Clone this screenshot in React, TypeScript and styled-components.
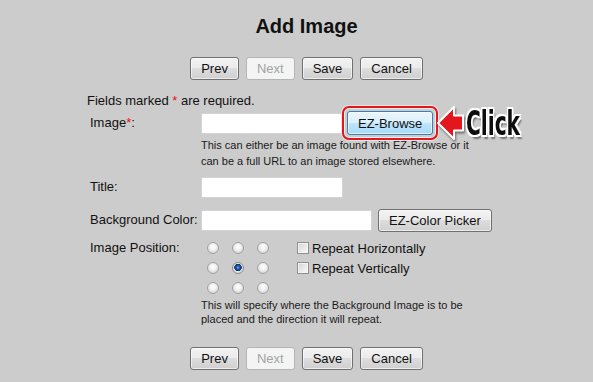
import { FC } from 'react'
import styled, { createGlobalStyle } from 'styled-components'

// page

const GlobalStyle = createGlobalStyle`
  html, body {
    margin: 0;
    padding: 0;
    background: #cccccc;
  }
  body {
    font-family: 'Liberation Sans', Arial, sans-serif;
    font-size: 13px;
    color: #111;
  }
`

const Page = styled.div`
  width: 593px;
  height: 382px;
  padding: 14px 0 0 20px;
  box-sizing: border-box;
  overflow: hidden;
`

const Heading = styled.h1`
  margin: 0;
  text-align: center;
  font-size: 20px;
  line-height: 24px;
  font-weight: bold;
  color: #111;
`

// buttons

const ButtonBar = styled.div<{ $top: number }>`
  display: flex;
  justify-content: center;
  gap: 7px;
  margin-top: ${p => p.$top}px;
`

const Btn = styled.button<{ $hot?: boolean }>`
  height: ${p => (p.$hot ? 24 : 23)}px;
  padding: 0 10px;
  margin: 0;
  font-family: inherit;
  font-size: 13px;
  color: #111;
  border: 1px solid ${p => (p.$hot ? '#3c7fb1' : '#707070')};
  border-radius: 3px;
  background: ${p =>
    p.$hot
      ? 'linear-gradient(#eaf6fd 0%, #d9f0fc 50%, #bee6fd 50%, #a7d9f5 100%)'
      : 'linear-gradient(#f2f2f2 0%, #ebebeb 50%, #dddddd 50%, #cfcfcf 100%)'};
  box-shadow: inset 0 0 0 1px rgba(255, 255, 255, 0.6);
  cursor: pointer;

  &:disabled {
    color: #a3a3a3;
    border-color: #b5b5b5;
    background: #f4f4f4;
    box-shadow: none;
    cursor: default;
  }
`

// form

const Form = styled.div`
  margin: 13px 0 0 67px;
`

const Notice = styled.div`
  line-height: 16px;
`

const Req = styled.span`
  color: #e8120c;
`

const Field = styled.div<{ $top: number }>`
  display: grid;
  grid-template-columns: 114px auto;
  margin-top: ${p => p.$top}px;
`

const Label = styled.div<{ $lh: number }>`
  padding-left: 3px;
  line-height: ${p => p.$lh}px;
  align-self: start;
`

const Controls = styled.div`
  display: flex;
  align-items: center;
  height: 24px;
`

const TextInput = styled.input<{ $w: number }>`
  width: ${p => p.$w}px;
  height: 21px;
  box-sizing: border-box;
  margin: 0;
  padding: 0 3px;
  border: 1px solid #d4d4d4;
  border-radius: 2px;
  background: #fff;
  font-family: inherit;
  font-size: 13px;
`

const Gap = styled.div<{ $w: number }>`
  width: ${p => p.$w}px;
  flex-shrink: 0;
`

const Help = styled.div<{ $lh: number; $top: number }>`
  grid-column: 2;
  margin-top: ${p => p.$top}px;
  font-size: 11px;
  line-height: ${p => p.$lh}px;
  color: #1a1a1a;
`

// click annotation

const Highlight = styled.div`
  display: flex;
  flex-shrink: 0;
  padding: 3px;
  border: 2px solid #e3161e;
  border-radius: 7px;
  box-shadow: 0 0 0 1px rgba(255, 255, 255, 0.55), inset 0 0 0 1px rgba(255, 255, 255, 0.7);
`

const Arrow = styled.svg`
  flex-shrink: 0;
  margin-left: -2px;
  filter: drop-shadow(1px 2px 1px rgba(0, 0, 0, 0.45));
`

const ClickText = styled.span`
  display: inline-block;
  margin-left: 1px;
  font-family: 'DejaVu Sans Condensed', 'DejaVu Sans', sans-serif;
  font-weight: bold;
  font-size: 34px;
  line-height: 34px;
  color: #0d0d0d;
  transform: scaleX(0.66);
  transform-origin: left center;
  text-shadow:
    2px 0 0 #fff, -2px 0 0 #fff, 0 2px 0 #fff, 0 -2px 0 #fff,
    2px 2px 0 #fff, -2px -2px 0 #fff, 2px -2px 0 #fff, -2px 2px 0 #fff,
    3px 4px 2px rgba(0, 0, 0, 0.45);
`

// image position

const PositionArea = styled.div`
  display: flex;
`

const RadioGrid = styled.div`
  display: grid;
  grid-template-columns: repeat(3, 25px);
  grid-auto-rows: 20px;
  justify-items: center;
  align-items: center;
  margin-left: -1px;
`

const Radio = styled.input`
  appearance: none;
  width: 12px;
  height: 12px;
  margin: 0;
  border-radius: 50%;
  border: 1px solid #a2a2a2;
  background: radial-gradient(circle at 50% 40%, #ffffff 0, #f2f2f2 3px, #d6d6d6 6px);
  box-sizing: border-box;

  &:checked {
    border-color: #8d8d8d;
    background: radial-gradient(circle at 50% 45%, #6fb4f0 0, #1d62b4 1.5px, #0b3468 3.5px, #e8e8e8 4px, #d6d6d6 6px);
  }
`

const Checks = styled.div`
  display: flex;
  flex-direction: column;
  margin-left: 22px;
`

const CheckRow = styled.label`
  display: flex;
  align-items: center;
  height: 20px;
  gap: 3px;
`

const Checkbox = styled.input`
  appearance: none;
  width: 12px;
  height: 12px;
  margin: 0;
  box-sizing: border-box;
  border: 1px solid #8f8f8f;
  background: linear-gradient(135deg, #d2d2d2 0%, #ececec 60%, #f8f8f8 100%);
  box-shadow: inset 0 0 0 1px #f4f4f4;
`

const NavButtons: FC<{ top: number }> = ({ top }) => (
  <ButtonBar $top={top}>
    <Btn>Prev</Btn>
    <Btn disabled>Next</Btn>
    <Btn>Save</Btn>
    <Btn>Cancel</Btn>
  </ButtonBar>
)

const App = () => {
  const cells = [0, 1, 2, 3, 4, 5, 6, 7, 8]

  return (
    <Page>
      <GlobalStyle />
      <Heading>Add Image</Heading>

      <NavButtons top={19} />

      <Form>
        <Notice>
          Fields marked <Req>*</Req> are required.
        </Notice>

        <Field $top={2}>
          <Label $lh={24}>
            Image<Req>*</Req>:
          </Label>
          <Controls>
            <TextInput $w={141} />
            <Highlight>
              <Btn $hot>EZ-Browse</Btn>
            </Highlight>
            <Arrow width="29" height="36" viewBox="0 0 29 36">
              <path
                d="M2 18 L18 2 L18 10.5 L27 10.5 L27 25.5 L18 25.5 L18 34 Z"
                fill="#e3161e"
                stroke="#fff"
                strokeWidth="2"
                strokeLinejoin="round"
              />
            </Arrow>
            <ClickText>Click</ClickText>
          </Controls>
          <Help $lh={16} $top={2}>
            This can either be an image found with EZ-Browse or it
            <br />
            can be a full URL to an image stored elsewhere.
          </Help>
        </Field>

        <Field $top={6}>
          <Label $lh={24}>Title:</Label>
          <Controls>
            <TextInput $w={142} />
          </Controls>
        </Field>

        <Field $top={9}>
          <Label $lh={24}>Background Color:</Label>
          <Controls>
            <TextInput $w={171} />
            <Gap $w={6} />
            <Btn>EZ-Color Picker</Btn>
          </Controls>
        </Field>

        <Field $top={6}>
          <Label $lh={20}>Image Position:</Label>
          <PositionArea>
            <RadioGrid>
              {cells.map(i => (
                <Radio key={i} type="radio" name="pos" defaultChecked={i === 4} />
              ))}
            </RadioGrid>
            <Checks>
              <CheckRow>
                <Checkbox type="checkbox" />
                Repeat Horizontally
              </CheckRow>
              <CheckRow>
                <Checkbox type="checkbox" />
                Repeat Vertically
              </CheckRow>
            </Checks>
          </PositionArea>
          <Help $lh={14} $top={0}>
            This will specify where the Background Image is to be
            <br />
            placed and the direction it will repeat.
          </Help>
        </Field>
      </Form>

      <NavButtons top={21} />
    </Page>
  )
}

export default App
